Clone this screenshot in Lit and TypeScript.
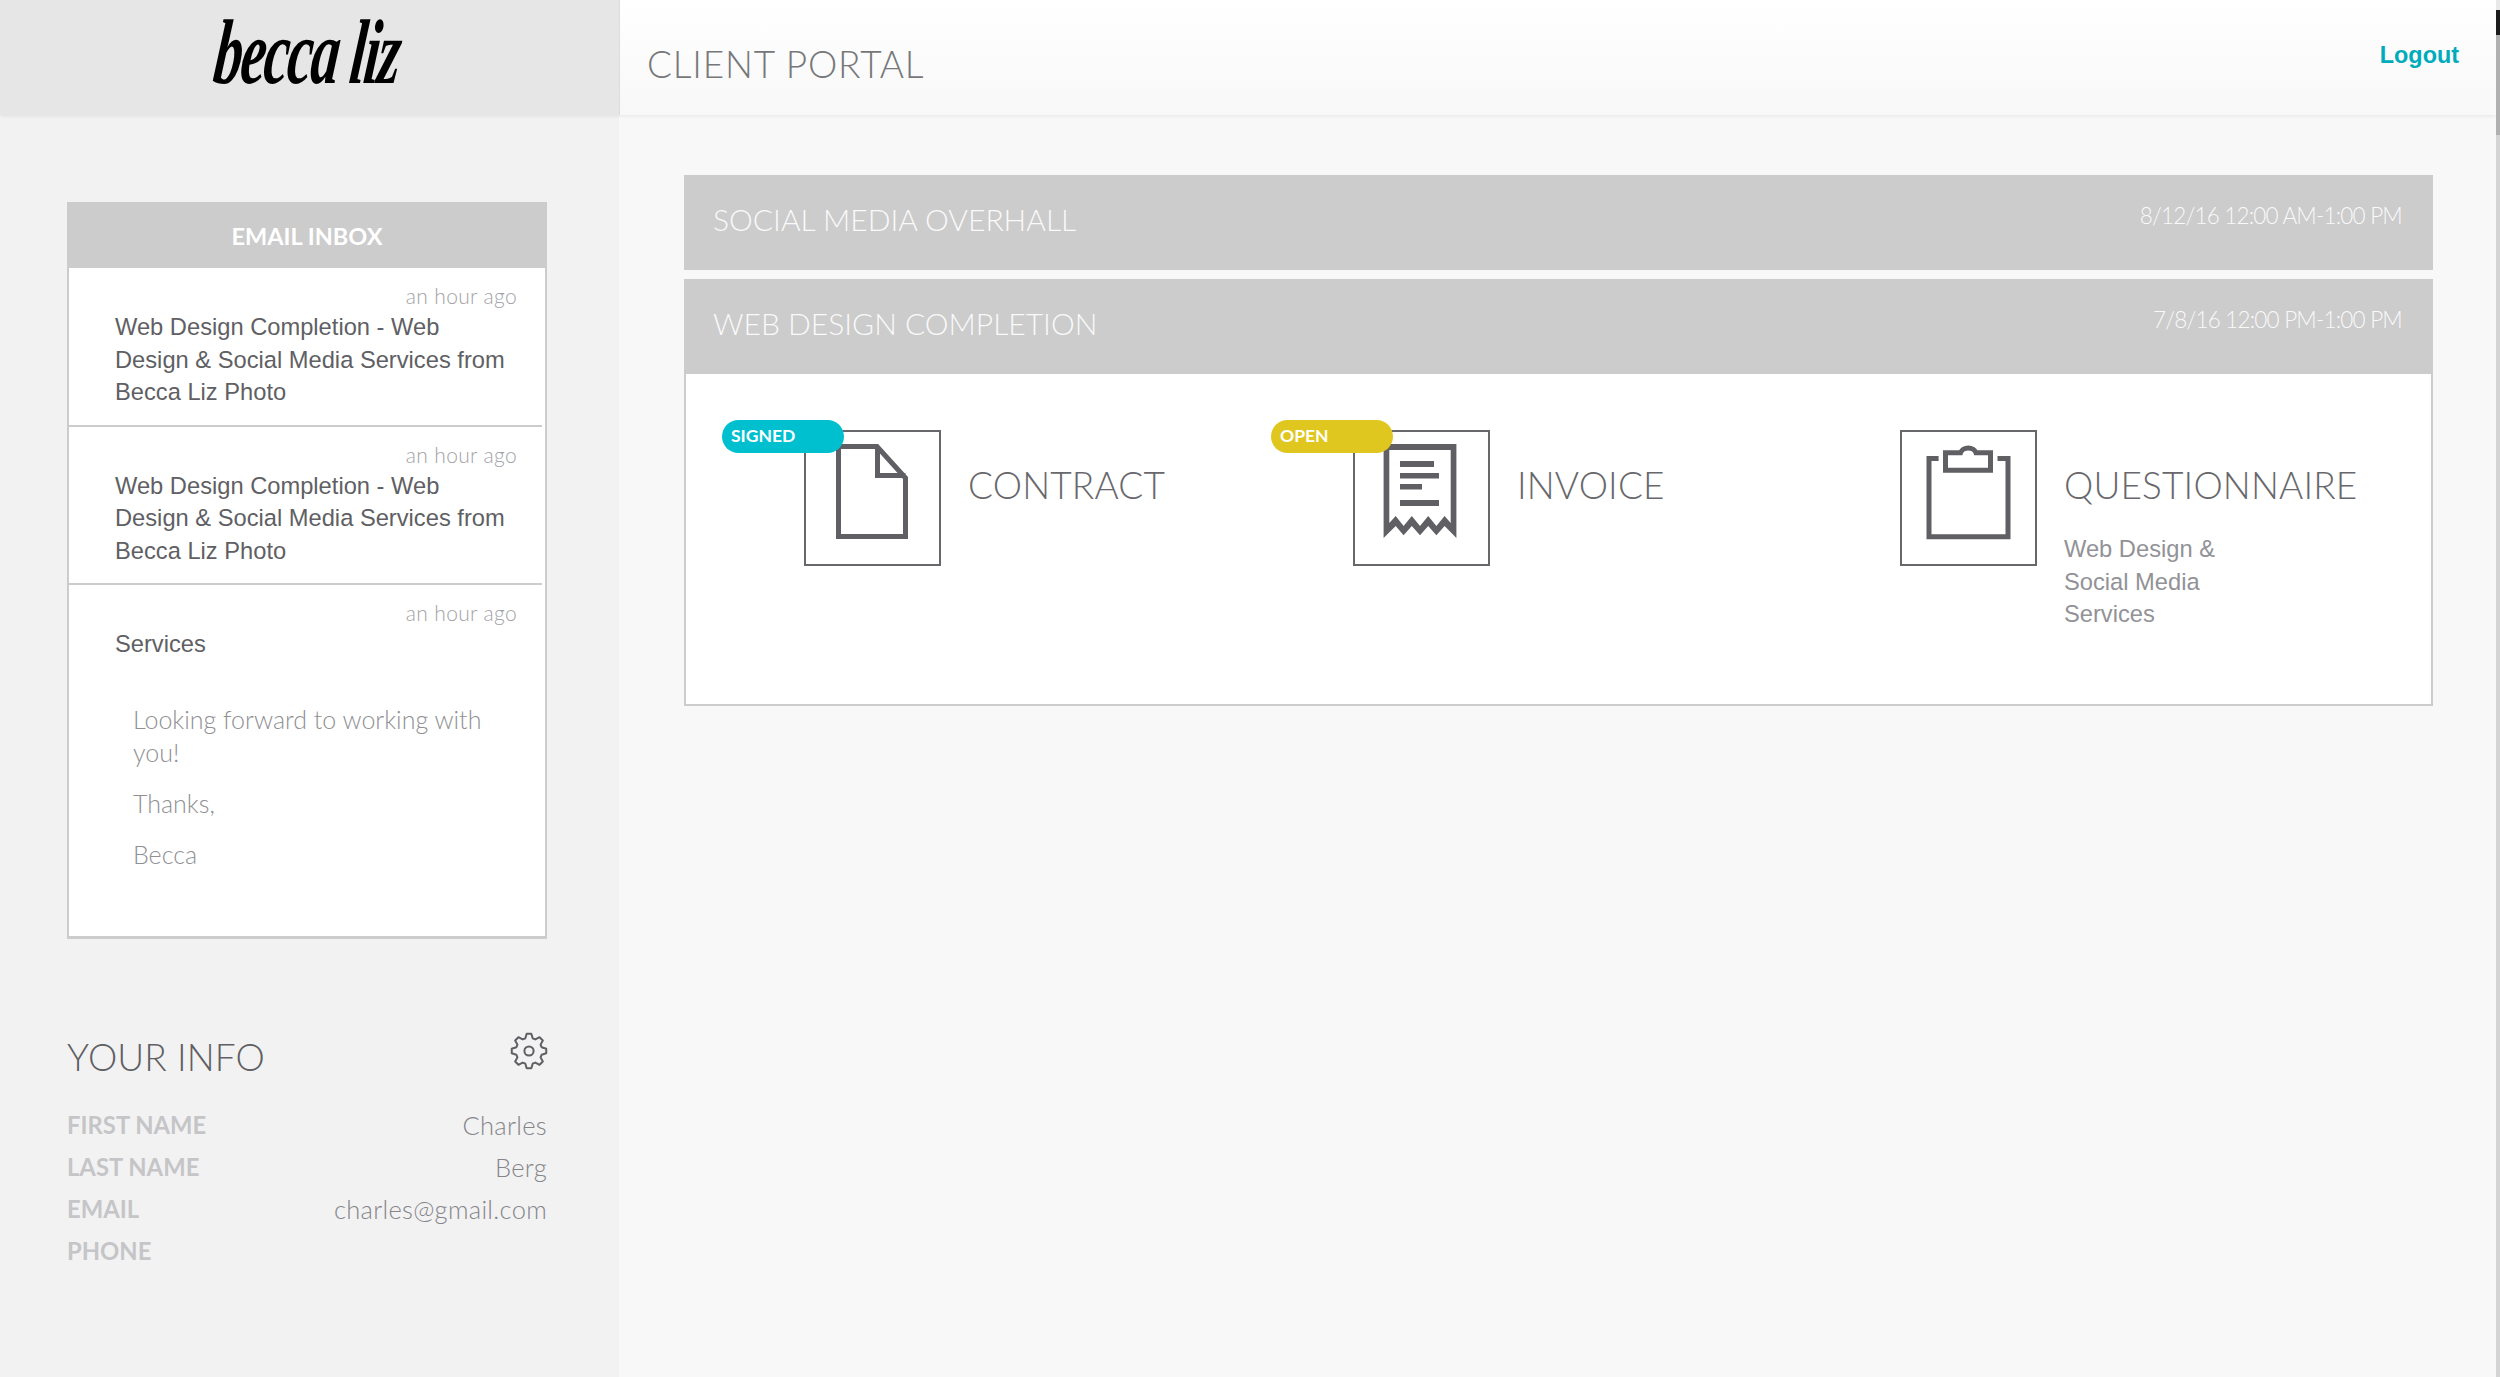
import { LitElement, html, css, svg } from "lit";
import { customElement } from "lit/decorators.js";

function gearPath() {
  const cx = 20, cy = 20, pts: string[] = [];
  const teeth = 8;
  for (let i = 0; i < teeth; i++) {
    const a = (i / teeth) * Math.PI * 2 - Math.PI / 2;
    const step = (Math.PI * 2) / teeth;
    const seq: [number, number][] = [
      [13.2, a - step * 0.36],
      [17.4, a - step * 0.17],
      [17.4, a + step * 0.17],
      [13.2, a + step * 0.36],
    ];
    for (const [r, t] of seq) pts.push(`${(cx + r * Math.cos(t)).toFixed(2)} ${(cy + r * Math.sin(t)).toFixed(2)}`);
  }
  return "M" + pts.join("L") + "Z";
}

const docIcon = svg`<path d="M34.5 16.5H73L101.5 48V106.5H34.5Z M73.5 16.5V45.5H101.5" fill="none" stroke="#5f5f64" stroke-width="5"/>`;
const invoiceIcon = svg`<path fill-rule="evenodd" fill="#5f5f64" d="M30.6 14H103.4V108L91.6 96L83.4 105.3L75.2 96L67 105.3L58.8 96L50.6 105.3L42.7 96L30.6 108Z M36.3 20V93L42.7 86L50.6 96L58.8 86L67 96L75.2 86L83.4 96L91.6 86L97.7 93V20Z"/>
<path fill="#5f5f64" d="M47 31H81V37H47Z M47 43H86V48.5H47Z M47 54H69V59.5H47Z M47 70H86V76H47Z"/>`;
const clipIcon = svg`<path d="M38.6 28.5H29V106.8H108V28.5H97.5" fill="none" stroke="#5f5f64" stroke-width="5"/>
<path d="M45.5 40.2V22.8H60.5A8 6.5 0 0 1 76 22.8H90.5V40.2Z" fill="none" stroke="#5f5f64" stroke-width="5"/>`;

@customElement("app-root")
export class AppRoot extends LitElement {
  static styles = css`
    :host { display: block; width: 2500px; height: 1377px; overflow: hidden; position: relative; background: #f8f8f8; font-family: "Lato", "Liberation Sans", sans-serif; font-weight: 300; }
    * { box-sizing: border-box; }
    .sans { font-family: "Liberation Sans", Arial, sans-serif; font-weight: 400; }
    .top { display: flex; height: 115px; position: relative; z-index: 2; margin-right: 4px; box-shadow: 0 1px 4px rgba(0,0,0,.08); }
    .logo { width: 619px; background: #e6e6e6; display: flex; justify-content: center; overflow: hidden; }
    .logo span { font-family: "Liberation Serif", serif; font-style: italic; font-weight: 700; font-size: 92px; line-height: 104px; color: #000; display: block; transform: scaleX(.62) skewX(-10deg); letter-spacing: -3px; white-space: nowrap; margin-left: -6px; }
    .head { flex: 1; background: linear-gradient(#fff, #f8f8f8); border-left: 1px solid #dcdcdc; display: flex; justify-content: space-between; padding: 0 37px 0 27px; }
    .title { font-size: 37px; line-height: 44px; color: #77777a; margin-top: 42px; letter-spacing: .8px; }
    .logout { font-family: "Liberation Sans", Arial, sans-serif; font-weight: 700; font-size: 23.4px; line-height: 30px; color: #00abbb; margin-top: 40px; }
    .body { display: flex; height: 1262px; }
    .side { width: 619px; background: #f2f2f2; padding: 87px 72px 0 67px; }
    .card { border: 2px solid #ccc; border-top: 0; background: #fff; height: 737px; border-bottom: 3px solid #ccc; }
    .card h3 { margin: 0 -2px; height: 66px; background: #ccc; color: #fff; font-size: 23.5px; font-weight: 700; line-height: 68px; text-align: center; }
    .msg { padding: 14px 28px 0 46px; height: 158.5px; border-bottom: 2px solid #ccc; margin-right: 3px; }
    .msg:last-child { border: 0; }
    .time { font-size: 21px; line-height: 28px; color: #a2a2a6; text-align: right; margin-right: -3px; letter-spacing: .35px; }
    .subj { font-size: 23.7px; line-height: 32.7px; color: #5f5f64; margin-top: 1px; }
    .note { padding: 42px 0 0 18px; font-size: 25px; line-height: 33px; color: #909094; }
    .note p { margin: 0 0 18px; }
    .info { margin-top: 84px; }
    .info-head { display: flex; justify-content: space-between; align-items: flex-start; height: 81px; color: #5f5f64; }
    .info-head h2 { margin: 0; font-size: 37px; font-weight: 300; line-height: 44px; padding-top: 12px; letter-spacing: .1px; }
    .info-head svg { display: block; margin: 8px -2px 0 0; }
    .row { display: flex; justify-content: space-between; height: 42px; line-height: 42px; font-size: 25.5px; }
    .row b { color: #c5c5c8; font-weight: 700; font-size: 23.8px; }
    .row span { color: #85858a; letter-spacing: .3px; }
    .main { flex: 1; padding: 60px 67px 0 65px; }
    .bar { height: 95px; background: #ccc; color: #fff; display: flex; justify-content: space-between; padding: 0 31px 0 29px; }
    .bar .name { font-size: 30px; line-height: 40px; margin-top: 24px; opacity: .9; }
    .bar .date { font-size: 22.5px; line-height: 30px; margin-top: 26px; letter-spacing: -.8px; opacity: .9; }
    .gap { height: 9px; }
    .panel { border: 2px solid #ccc; border-top: 0; background: #fff; height: 332px; padding: 46px 0 0 36px; display: grid; grid-template-columns: 549px 547px 548px; }
    .item { display: flex; position: relative; padding: 10px 0 0 82px; }
    .pill { position: absolute; left: 0; top: 0; width: 122px; height: 33px; border-radius: 16.5px; color: #fff; font-size: 17.5px; font-weight: 700; line-height: 32px; padding-left: 9px; z-index: 1; }
    .signed { background: #00bfcf; }
    .open { background: #dfc720; }
    .box { width: 137px; height: 136px; border: 2px solid #68686c; flex: none; }
    .box svg { display: block; }
    .lab { margin-left: 27px; }
    .lab h4 { margin: 0; font-size: 37px; font-weight: 300; line-height: 44px; color: #68686c; padding-top: 33px; letter-spacing: .15px; white-space: nowrap; }
    .lab div { font-size: 23.7px; line-height: 32.7px; color: #929297; margin-top: 26px; width: 170px; }
    .scroll { position: absolute; right: 0; top: 0; width: 4px; height: 1377px; background: linear-gradient(#e8e8e8 0 10px, #1c1c1c 10px 35px, #b0b0b0 35px 135px, #d4d4d4 135px); z-index: 3; }
  `;

  private msg(subject: string) {
    return html`<div class="msg"><div class="time">an hour ago</div><div class="subj sans">${subject}</div></div>`;
  }

  private item(name: string, icon: unknown, pill?: string, sub?: string) {
    return html`<div class="item">
      ${pill ? html`<div class="pill ${pill.toLowerCase()}">${pill.toUpperCase()}</div>` : ""}
      <div class="box"><svg width="133" height="132" viewBox="2 2 133 132">${icon}</svg></div>
      <div class="lab"><h4>${name}</h4>${sub ? html`<div class="sans">${sub}</div>` : ""}</div>
    </div>`;
  }

  render() {
    const subject = "Web Design Completion - Web Design & Social Media Services from Becca Liz Photo";
    return html`
      <div class="top">
        <div class="logo"><span>becca liz</span></div>
        <div class="head"><div class="title">CLIENT PORTAL</div><div class="logout">Logout</div></div>
      </div>
      <div class="body">
        <aside class="side">
          <section class="card">
            <h3>EMAIL INBOX</h3>
            ${this.msg(subject)}
            ${this.msg(subject)}
            <div class="msg">
              <div class="time">an hour ago</div>
              <div class="subj sans">Services</div>
              <div class="note"><p>Looking forward to working with you!</p><p>Thanks,</p><p>Becca</p></div>
            </div>
          </section>
          <section class="info">
            <div class="info-head">
              <h2>YOUR INFO</h2>
              <svg width="40" height="40" viewBox="0 0 40 40"><path d=${gearPath()} fill="none" stroke="#5f5f64" stroke-width="2" stroke-linejoin="round"/><circle cx="20" cy="20" r="4.6" fill="none" stroke="#5f5f64" stroke-width="2"/></svg>
            </div>
            <div class="row"><b>FIRST NAME</b><span>Charles</span></div>
            <div class="row"><b>LAST NAME</b><span>Berg</span></div>
            <div class="row"><b>EMAIL</b><span>charles@gmail.com</span></div>
            <div class="row"><b>PHONE</b><span></span></div>
          </section>
        </aside>
        <main class="main">
          <div class="bar"><div class="name">SOCIAL MEDIA OVERHALL</div><div class="date">8/12/16 12:00 AM-1:00 PM</div></div>
          <div class="gap"></div>
          <div class="bar"><div class="name">WEB DESIGN COMPLETION</div><div class="date">7/8/16 12:00 PM-1:00 PM</div></div>
          <div class="panel">
            ${this.item("CONTRACT", docIcon, "Signed")}
            ${this.item("INVOICE", invoiceIcon, "Open")}
            ${this.item("QUESTIONNAIRE", clipIcon, undefined, "Web Design & Social Media Services")}
          </div>
        </main>
      </div>
      <div class="scroll"></div>
    `;
  }
}
